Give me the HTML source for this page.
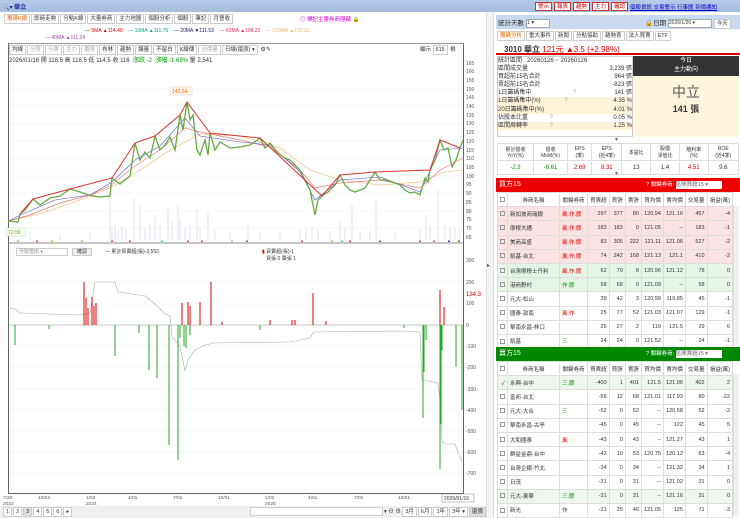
<!DOCTYPE html>
<html><head><meta charset="utf-8"><style>
*{margin:0;padding:0;box-sizing:border-box}
body{width:740px;height:518px;overflow:hidden;background:#fff;font-family:"Liberation Sans","Noto Sans CJK TC",sans-serif;font-size:6px;color:#333;position:relative}
.a{position:absolute}
.top{left:0;top:0;width:740px;height:12px;background:linear-gradient(#b7cbe8,#a3bbdf)}
.btn{display:inline-block;border:1px solid #c33;color:#c00;background:#fff;font-size:5.5px;padding:0 2px;margin-right:2px;height:9px;line-height:8px}
.tab{display:inline-block;border:1px solid #ccc;padding:0 2px;height:10px;line-height:9px;font-size:5.5px;margin-right:1px;background:#fff}
table{border-collapse:collapse;font-size:5.5px}
td,th{border:1px solid #ddd;padding:0 2px;height:14.2px;white-space:nowrap;font-weight:normal}
.tb td{text-align:right}
.tb td:nth-child(2),.tb td:nth-child(3){text-align:left}
.pk td{background:#fbe3e3}.gr td{background:#e6f6e6}.lg td{background:#eef6ee}
.r{color:#d00}.g{color:#090}
.cb{display:inline-block;width:5px;height:5px;border:1px solid #999;vertical-align:middle}
</style></head><body>
<div class="a top"></div>
<div class="a" style="left:2px;top:2px;font-size:6px;color:#226">🔍▾ <b style="color:#22a">華立</b></div>
<div class="a" style="left:535px;top:2px"><span class="btn">警示</span><span class="btn">報表</span><span class="btn">趨勢</span><span class="btn">主力</span><span class="btn">確認</span></div>
<div class="a" style="left:630px;top:3px;font-size:5.5px;color:#00c;text-decoration:underline">個股資訊 交易警示 行事曆 到價通知</div>

<div class="a" style="left:4px;top:14px"><span class="tab" style="color:#e60">籌碼K線</span><span class="tab">即時走勢</span><span class="tab">分點K線</span><span class="tab">大量券商</span><span class="tab">主力地圖</span><span class="tab">個股分析</span><span class="tab">個股</span><span class="tab">筆記</span><span class="tab">月營收</span></div>
<div class="a" style="left:300px;top:15px;color:#c0c;font-size:5.5px">◎ 標記主籌券商隱藏 🔒</div>
<div class="a" style="left:85px;top:28px;font-size:5px"><span class="r">— 5MA ▲114.40</span> &nbsp;&nbsp; <span style="color:#0a8">— 10MA ▲111.75</span> &nbsp;&nbsp; <span style="color:#226">— 20MA ▼111.53</span> &nbsp;&nbsp; <span style="color:#d36">— 60MA ▲108.22</span> &nbsp;&nbsp; <span style="color:#eb6">— 100MA ▲102.21</span></div>
<div class="a" style="left:45px;top:35px;font-size:5px;color:#a4a">— 40MA ▲111.24</div>

<div class="a" style="left:8px;top:43px;width:456px;height:451px;border:1px solid #666;border-top-color:#999"></div>
<div class="a" style="left:9px;top:45px"><span class="tab">均線</span><span class="tab" style="color:#aaa">分買</span><span class="tab" style="color:#aaa">分賣</span><span class="tab" style="color:#aaa">主力</span><span class="tab" style="color:#aaa">籌買</span><span class="tab">布林</span><span class="tab">趨勢</span><span class="tab">爆量</span><span class="tab">不留白</span><span class="tab">K線傳</span><span class="tab" style="color:#aaa">分價量</span><span class="tab">日線(還原) ▾</span> ⚙✎</div>
<div class="a" style="left:420px;top:45px;font-size:5.5px">顯示 <span class="tab">615</span> 根</div>
<div class="a" style="left:9px;top:55px;font-size:6px">2026/01/16 開 118.5 高 118.5 低 114.5 收 116 &nbsp;<span class="g">漲跌 -2 &nbsp;漲幅 -1.69%</span> 量 2,541</div>

<svg class="a" style="left:0;top:0" width="490" height="518">
<g stroke="#eee" stroke-width="0.5">
<line x1="9" y1="89" x2="463" y2="89"/><line x1="9" y1="106" x2="463" y2="106"/><line x1="9" y1="124" x2="463" y2="124"/><line x1="9" y1="141" x2="463" y2="141"/><line x1="9" y1="158" x2="463" y2="158"/><line x1="9" y1="176" x2="463" y2="176"/><line x1="9" y1="193" x2="463" y2="193"/><line x1="9" y1="211" x2="463" y2="211"/><line x1="9" y1="228" x2="463" y2="228"/>
<line x1="9" y1="282" x2="463" y2="282"/><line x1="9" y1="304" x2="463" y2="304"/><line x1="9" y1="346" x2="463" y2="346"/><line x1="9" y1="367" x2="463" y2="367"/><line x1="9" y1="389" x2="463" y2="389"/><line x1="9" y1="410" x2="463" y2="410"/><line x1="9" y1="431" x2="463" y2="431"/><line x1="9" y1="452" x2="463" y2="452"/><line x1="9" y1="473" x2="463" y2="473"/>
</g>
<g stroke="#c5d6e6" stroke-width="0.6">
<path d="M110 240V192M115 240V225M134 240V198M140 240V205M155 240V215M168 240V208M178 240V205M180 240V220M190 240V225M197 240V210M208 240V212M248 240V225M306 240V228M340 240V220M352 240V205M376 240V200M426 240V215M438 240V190M445 240V225M455 240V228M30 240V232M60 240V234M90 240V232M260 240V233M280 240V232M395 240V233M112 240V228M118 240V230M122 240V226M126 240V229M145 240V228M150 240V224M160 240V226M172 240V222M185 240V227M200 240V228M215 240V230M230 240V232M300 240V230M312 240V226M318 240V229M330 240V231M345 240V228M360 240V232M370 240V231M420 240V229M430 240V226M450 240V227M460 240V230"/>
</g>
<g font-size="4" fill="#8c4">
<text x="16" y="242">▲</text><text x="35" y="242" fill="#d3c">▲</text><text x="50" y="242" fill="#fa0">▲</text><text x="80" y="242">▲</text><text x="110" y="242" fill="#d33">▲</text><text x="128" y="242" fill="#d33">▲</text><text x="160" y="242" fill="#3cc">▲</text><text x="186" y="242" fill="#d33">▲</text><text x="200" y="242" fill="#d33">▲</text><text x="230" y="242">▲</text><text x="245" y="242" fill="#933">▲</text><text x="300" y="242" fill="#d33">▲</text><text x="330" y="242">▲</text><text x="340" y="242" fill="#3cc">▲</text><text x="348" y="242" fill="#d33">▲</text><text x="378" y="242" fill="#933">▲</text><text x="418" y="242" fill="#d33">▲</text><text x="432" y="242" fill="#d3c">▲</text><text x="447" y="242" fill="#22c">▲</text><text x="457" y="242" fill="#933">▲</text>
</g>
<polyline fill="none" stroke="#ec9" stroke-width="0.8" points="8,221 40,214 80,200 110,188 140,170 170,150 200,134 240,136 280,148 310,170 340,180 380,185 420,182 445,172 463,170"/>
<polyline fill="none" stroke="#e77" stroke-width="0.7" points="8,221 30,215 60,203 90,195 110,186 135,166 160,150 185,128 200,132 240,140 270,147 300,170 315,188 340,183 380,180 420,188 440,170 463,158"/>
<polyline fill="none" stroke="#55c" stroke-width="0.6" points="8,221 25,213 55,200 90,195 112,182 135,160 160,146 185,118 200,136 240,142 270,145 300,172 315,200 340,180 380,177 420,192 440,150 463,148"/>
<polyline fill="none" stroke="#6a4" stroke-width="1.3" points="8,221 18,222 20,214 25,210 33,199 40,205 50,198 60,196 70,189 80,192 92,196 100,197 110,196 112,178 120,184 130,176 135,143 140,160 145,152 150,158 155,136 160,150 165,145 170,137 175,150 180,115 183,130 187,102 190,120 193,115 197,150 200,155 205,140 208,155 210,133 215,150 220,142 230,148 240,147 250,145 260,138 265,148 270,143 278,153 285,158 290,160 295,165 300,170 305,180 310,190 313,205 315,215 318,200 322,196 328,192 335,185 340,175 345,185 350,190 355,192 365,188 375,172 380,180 385,180 392,182 400,185 405,190 410,193 415,192 420,195 425,178 428,182 430,170 435,160 440,140 444,150 448,148 452,167 456,160 460,148 463,140"/>
<polyline fill="none" stroke="#d33" stroke-width="1" points="20,214 33,199 70,189 112,178 135,143 155,136 180,115 187,102 210,133 260,138 322,196 340,175 375,172 430,170 440,140 460,148"/>
<rect x="6" y="228" width="20" height="8" fill="#f8fff0" stroke="#cdb" stroke-width="0.5"/><text x="8" y="234" font-size="5" fill="#6a4">72.59</text>
<rect x="170" y="87" width="22" height="8" fill="#fff8f0" stroke="#eca" stroke-width="0.5"/><text x="172" y="93" font-size="5" fill="#e60">143.54</text>
<g font-size="5" fill="#555">
<text x="466" y="65">165</text><text x="466" y="73">160</text><text x="466" y="82">155</text><text x="466" y="91">150</text><text x="466" y="99">145</text><text x="466" y="108">140</text><text x="466" y="117">135</text><text x="466" y="125">130</text><text x="466" y="134">125</text><text x="466" y="143">120</text><text x="466" y="152">115</text><text x="466" y="160">110</text><text x="466" y="169">105</text><text x="466" y="178">100</text><text x="466" y="186">95</text><text x="466" y="195">90</text><text x="466" y="204">85</text><text x="466" y="213">80</text><text x="466" y="221">75</text><text x="466" y="230">70</text><text x="466" y="239">65</text>
<text x="466" y="262">300</text><text x="466" y="284">200</text><text x="466" y="305">100</text><text x="466" y="327">0</text><text x="466" y="348">-100</text><text x="466" y="369">-200</text><text x="466" y="391">-300</text><text x="466" y="412">-400</text><text x="466" y="433">-500</text><text x="466" y="454">-600</text><text x="466" y="475">-700</text>
</g>
<text x="466" y="296" font-size="6" fill="#d00">134.3</text>
<line x1="9" y1="243" x2="463" y2="243" stroke="#666" stroke-width="0.8"/>
<line x1="9" y1="325" x2="463" y2="325" stroke="#888" stroke-width="0.5"/>
<polyline fill="none" stroke="#aaa" stroke-width="0.6" points="8,308 15,309 20,313 80,315 90,313 95,282 115,282 118,292 145,296 155,304 165,314 170,316 172,337 175,340 180,347 185,371 188,360 195,350 205,345 210,344 212,343 290,342 300,340 310,338 313,333 315,332 400,331 420,332 422,380 438,383 440,400 442,442 446,444 455,444 458,452 462,462"/>
<g stroke="#d00" stroke-width="1">
<path d="M84 325V282M86 325V298M88 325V308M92 325V297M94 325V306M96 325V303M182 325V303M188 325V302M190 325V306M200 325V302M211 325V282M222 325V322M270 325V320M313 325V293M326 325V321M440 325V290M444 325V307M292 325V320M295 325V320"/>
</g>
<g stroke="#2a2" stroke-width="1">
<path d="M15 325V345M49 325V329M115 325V356M139 325V333M149 325V370M157 325V378M169 325V445M178 325V460M180 325V338M184 325V346M186 325V348M190 325V335M260 325V330M404 325V328M423 325V418M424 325V372M426 325V340M440 325V469M441 325V424M442 325V350M456 325V367M462 325V410"/>
</g>
<g font-size="4.8" fill="#555">
<text x="3" y="499">7/20</text><text x="3" y="505">2023</text><text x="38" y="499">10/02</text><text x="86" y="499">1/02</text><text x="86" y="505">2024</text><text x="128" y="499">4/01</text><text x="173" y="499">7/01</text><text x="218" y="499">10/01</text><text x="265" y="499">1/02</text><text x="265" y="505">2025</text><text x="308" y="499">4/01</text><text x="354" y="499">7/01</text><text x="398" y="499">10/01</text>
</g>
<rect x="442" y="494" width="32" height="8" fill="#fff" stroke="#888" stroke-width="0.5"/><text x="444" y="500" font-size="5" fill="#333">2026/01/16</text>
</svg>
<div class="a" style="left:16px;top:248px;width:52px;height:8px;border:1px solid #ccc;font-size:5px;color:#888;line-height:7px;padding-left:2px">分點借出 ▾</div>
<div class="a" style="left:72px;top:248px;width:20px;height:8px;border:1px solid #ccc;background:#eee;font-size:5px;line-height:7px;text-align:center">確認</div>
<div class="a" style="left:105px;top:248px;font-size:5px">— 累計買賣超(張)-3,552</div>
<div class="a" style="left:262px;top:248px;font-size:5px"><span class="r">▮</span> 買賣超(張)-1<br>&nbsp;&nbsp;&nbsp;買張 0 賣張 1</div>

<div class="a" style="left:0;top:506px;width:486px;height:12px;background:#f0f0f0"></div>
<div class="a" style="left:3px;top:507px;font-size:5.5px"><span class="tab">1</span><span class="tab">2</span><span class="tab" style="background:#ddd">3</span><span class="tab">4</span><span class="tab">5</span><span class="tab">6</span><span class="tab">▸</span></div>
<div class="a" style="left:250px;top:507px;width:133px;height:9px;border:1px solid #ccc;background:#fff"></div>
<div class="a" style="left:384px;top:507px;font-size:5.5px">▾ ⊖ ⊕ <span class="tab">3月</span><span class="tab">6月</span><span class="tab">1年</span><span class="tab">3年 ▾</span><span class="tab" style="background:#ddd">還價</span></div>

<div class="a" style="left:486px;top:12px;width:8px;height:506px;background:#f4f4f4;border-left:1px solid #ddd;border-right:1px solid #ddd"></div>
<div class="a" style="left:487px;top:262px;font-size:6px;color:#555">▸</div>

<div class="a" style="left:496px;top:15px;width:244px;height:14px;background:#c9d9ef"></div>
<div class="a" style="left:498px;top:17px;font-size:6.5px">統計天數 <span style="display:inline-block;width:24px;height:9px;border:1px solid #aaa;background:#fff;font-size:5.5px;vertical-align:middle">1 ▾</span></div>
<div class="a" style="left:645px;top:17px;font-size:6.5px">🔒日期 <span style="display:inline-block;width:44px;height:9px;border:1px solid #aaa;background:#fff;font-size:5px;vertical-align:middle">2026/1/26 ▾</span> <span class="tab">今天</span></div>
<div class="a" style="left:497px;top:31px"><span class="tab" style="color:#e60">籌碼分析</span><span class="tab">重大事件</span><span class="tab">新聞</span><span class="tab">分點協助</span><span class="tab">趨勢表</span><span class="tab">法人買賣</span><span class="tab">ETF</span></div>
<div class="a" style="left:496px;top:42px;width:244px;height:13px;border-bottom:2px solid #d00"></div>
<div class="a" style="left:504px;top:44px;font-size:8px"><b>3010 華立</b> <span class="r">121元 ▲3.5 (+2.98%)</span></div>
<div class="a" style="left:497px;top:56px;width:136px;height:81px;border:1px solid #ccc;background:#fff"></div>
<div class="a" style="left:498px;top:57px;width:134px;font-size:6px;line-height:8.1px">
<div>統計區間 &nbsp; 20260126 ~ 20260126</div>
<div>區間成交量<span style="float:right">3,239 張</span></div>
<div>買超前15名合計<span style="float:right">964 張</span></div>
<div>賣超前15名合計<span style="float:right">-823 張</span></div>
<div>1日籌碼集中 <span style="margin-left:40px;color:#aaa">?</span><span style="float:right">141 張</span></div>
<div style="background:#fdf3d8">1日籌碼集中(%) <span style="margin-left:22px;color:#aaa">?</span><span style="float:right">4.35 %</span></div>
<div style="background:#fdf3d8">20日籌碼集中(%)<span style="float:right">4.01 %</span></div>
<div>佔股本比重 <span style="margin-left:20px;color:#aaa">?</span><span style="float:right">0.05 %</span></div>
<div style="background:#fdf3d8">區間周轉率 <span style="margin-left:20px;color:#aaa">?</span><span style="float:right">1.25 %</span></div>
</div>
<div class="a" style="left:633px;top:56px;width:106px;height:20px;background:#333;color:#fff;text-align:center;font-size:6px;line-height:9px;padding-top:1px">今日<br>主力動向</div>
<div class="a" style="left:633px;top:76px;width:106px;height:61px;background:#fdf6dd;text-align:center"><div style="font-size:14px;color:#555;margin-top:6px">中立</div><div style="font-size:9px;font-weight:bold">141 張</div></div>
<div class="a" style="left:614px;top:137px;font-size:5px;color:#666">▼</div>
<table class="a" style="left:497px;top:143px;width:242px;text-align:center">
<tr style="font-size:5px"><td style="height:17px">累計營收<br>YoY(%)</td><td>營收<br>MoM(%)</td><td>EPS<br>(季)</td><td>EPS<br>(近4季)</td><td>本益比</td><td>股價<br>淨值比</td><td>殖利率<br>(%)</td><td>ROE<br>(近4季)</td></tr>
<tr style="font-weight:bold;font-size:6px"><td class="g">-2.3</td><td class="g">-6.61</td><td class="r">2.69</td><td class="r">8.31</td><td>13</td><td>1.4</td><td class="r">4.51</td><td>9.6</td></tr>
</table>
<div class="a" style="left:614px;top:171px;font-size:5px;color:#666">▼</div>

<div class="a" style="left:496px;top:178px;width:244px;height:14px;background:#e00;color:#fff;font-size:7px;line-height:14px;padding-left:3px">買方15<span style="position:absolute;left:150px;font-size:5.5px">? 關鍵券商: <span style="display:inline-block;width:46px;height:8px;background:#fff;color:#666;line-height:8px">區間買超15 ▾</span></span></div>
<table class="a tb" style="left:497px;top:192px;width:236px">
<tr style="text-align:center"><td style="width:9px;height:12px"><span class="cb"></span></td><td style="width:52px;text-align:center">券商名稱</td><td style="width:28px;text-align:center">關鍵券商</td><td>買賣超</td><td>買張</td><td>賣張</td><td>買均價</td><td>賣均價</td><td>交易量</td><td>損益(萬)</td></tr>
<tr class="pk"><td><span class="cb"></span></td><td>新加坡商瑞銀</td><td class="r">風.作.節</td><td>297</td><td>377</td><td>80</td><td>120.94</td><td>121.16</td><td>457</td><td>-4</td></tr>
<tr class="pk"><td><span class="cb"></span></td><td>摩根大通</td><td class="r">風.作.節</td><td>183</td><td>183</td><td>0</td><td>121.05</td><td>--</td><td>183</td><td>-1</td></tr>
<tr class="pk"><td><span class="cb"></span></td><td>美商高盛</td><td class="r">風.作.節</td><td>83</td><td>305</td><td>222</td><td>121.11</td><td>121.06</td><td>527</td><td>-2</td></tr>
<tr class="pk"><td><span class="cb"></span></td><td>凱基-台北</td><td class="r">風.作.節</td><td>74</td><td>242</td><td>168</td><td>121.13</td><td>121.1</td><td>410</td><td>-2</td></tr>
<tr class="gr"><td><span class="cb"></span></td><td>台灣摩根士丹利</td><td class="r">風.作.節</td><td>62</td><td>70</td><td>8</td><td>120.96</td><td>121.12</td><td>78</td><td>0</td></tr>
<tr class="gr"><td><span class="cb"></span></td><td>港商野村</td><td class="g">作.節</td><td>58</td><td>58</td><td>0</td><td>121.09</td><td>--</td><td>58</td><td>0</td></tr>
<tr><td><span class="cb"></span></td><td>元大-松山</td><td></td><td>39</td><td>42</td><td>3</td><td>120.99</td><td>119.85</td><td>45</td><td>-1</td></tr>
<tr><td><span class="cb"></span></td><td>國泰-敦南</td><td class="r">風.作</td><td>25</td><td>77</td><td>52</td><td>121.03</td><td>121.07</td><td>129</td><td>-1</td></tr>
<tr><td><span class="cb"></span></td><td>華南永昌-林口</td><td></td><td>25</td><td>27</td><td>2</td><td>119</td><td>121.5</td><td>29</td><td>6</td></tr>
<tr><td><span class="cb"></span></td><td>凱基</td><td class="g">三</td><td>24</td><td>24</td><td>0</td><td>121.52</td><td>--</td><td>24</td><td>-1</td></tr>
</table>

<div class="a" style="left:496px;top:347px;width:244px;height:14px;background:#080;color:#fff;font-size:7px;line-height:14px;padding-left:3px">賣方15<span style="position:absolute;left:150px;font-size:5.5px">? 關鍵券商: <span style="display:inline-block;width:46px;height:8px;background:#fff;color:#666;line-height:8px">區間賣超15 ▾</span></span></div>
<table class="a tb" style="left:497px;top:361px;width:236px">
<tr style="text-align:center"><td style="width:9px;height:12px"><span class="cb"></span></td><td style="width:52px;text-align:center">券商名稱</td><td style="width:28px;text-align:center">關鍵券商</td><td>買賣超</td><td>買張</td><td>賣張</td><td>買均價</td><td>賣均價</td><td>交易量</td><td>損益(萬)</td></tr>
<tr class="lg"><td>✓</td><td>永興-台中</td><td class="g">三.節</td><td>-400</td><td>1</td><td>401</td><td>121.5</td><td>121.06</td><td>402</td><td>2</td></tr>
<tr><td><span class="cb"></span></td><td>富邦-台北</td><td></td><td>-56</td><td>12</td><td>68</td><td>121.01</td><td>117.93</td><td>80</td><td>-22</td></tr>
<tr><td><span class="cb"></span></td><td>元大-大合</td><td class="g">三</td><td>-52</td><td>0</td><td>52</td><td>--</td><td>120.58</td><td>52</td><td>-2</td></tr>
<tr><td><span class="cb"></span></td><td>華南永昌-古亭</td><td></td><td>-45</td><td>0</td><td>45</td><td>--</td><td>122</td><td>45</td><td>5</td></tr>
<tr><td><span class="cb"></span></td><td>大和國泰</td><td class="r">風</td><td>-43</td><td>0</td><td>43</td><td>--</td><td>121.27</td><td>43</td><td>1</td></tr>
<tr><td><span class="cb"></span></td><td>群益金鼎-台中</td><td></td><td>-43</td><td>10</td><td>53</td><td>120.75</td><td>120.12</td><td>63</td><td>-4</td></tr>
<tr><td><span class="cb"></span></td><td>台灣企銀-竹北</td><td></td><td>-34</td><td>0</td><td>34</td><td>--</td><td>121.32</td><td>34</td><td>1</td></tr>
<tr><td><span class="cb"></span></td><td>日茂</td><td></td><td>-31</td><td>0</td><td>31</td><td>--</td><td>121.02</td><td>31</td><td>0</td></tr>
<tr class="lg"><td><span class="cb"></span></td><td>元大-東華</td><td class="g">三.節</td><td>-31</td><td>0</td><td>31</td><td>--</td><td>121.16</td><td>31</td><td>0</td></tr>
<tr><td><span class="cb"></span></td><td>新光</td><td>作</td><td>-21</td><td>25</td><td>46</td><td>121.05</td><td>125</td><td>71</td><td>-3</td></tr>
</table>
<div class="a" style="left:733px;top:205px;width:6px;height:140px;background:#f0f0f0;border-left:1px solid #ddd"></div>
<div class="a" style="left:733px;top:374px;width:6px;height:142px;background:#f0f0f0;border-left:1px solid #ddd"></div>
</body></html>
